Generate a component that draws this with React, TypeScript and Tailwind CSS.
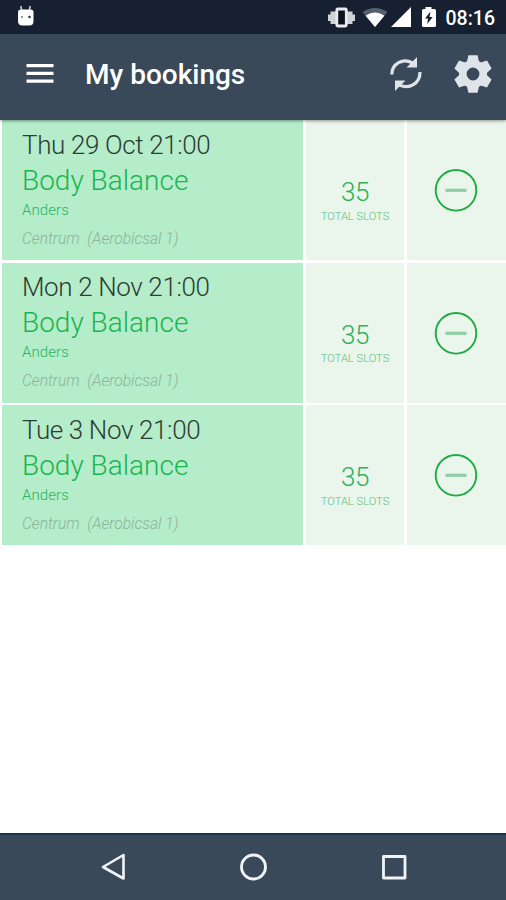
interface Booking {
  date: string;
  title: string;
  instructor: string;
  club: string;
  room: string;
  slots: number;
}

const bookings: Booking[] = [
  { date: 'Thu 29 Oct 21:00', title: 'Body Balance', instructor: 'Anders', club: 'Centrum', room: '(Aerobicsal 1)', slots: 35 },
  { date: 'Mon 2 Nov 21:00', title: 'Body Balance', instructor: 'Anders', club: 'Centrum', room: '(Aerobicsal 1)', slots: 35 },
  { date: 'Tue 3 Nov 21:00', title: 'Body Balance', instructor: 'Anders', club: 'Centrum', room: '(Aerobicsal 1)', slots: 35 },
];

const gearTeeth = [0, 60, 120, 180, 240, 300];

function StatusBar() {
  return (
    <div className="flex h-[34px] shrink-0 items-center justify-between bg-[#162030] pr-[11px] pl-4 text-white">
      <svg width="20" height="24" viewBox="0 0 20 24" fill="#fff">
        <path d="M4.800 1 5.800 6M14.200 1 13.200 6" stroke="#c4cad1" strokeWidth="1.600" />
        <path d="M2 7Q2 4.500 5 4.500h9.500q3 0 3 2.500V16q0 4.500-4.500 4.500H6.500Q2 20.500 2 16z" />
        <circle cx="6" cy="12" r="1.100" fill="#7b848d" />
        <circle cx="13.500" cy="12" r="1.200" fill="#162030" />
      </svg>
      <div className="flex items-center">
        <svg width="110" height="24" viewBox="0 0 110 24" fill="#fff">
          <path d="M0 9.500h2.500v6.500H0zM2.500 6.500H8v12.500H2.500zM24.500 9.500H27v6.500h-2.500zM19 6.500h5.500v12.500H19z" fill="#cfd2d6" />
          <rect x="8.800" y="4" width="9.500" height="17" rx="1" fill="#0c1420" stroke="#e8eaec" strokeWidth="2.800" />
          <path d="M34.500 7Q47 -1 59.500 7L47 22z" fill="#53606d" />
          <path d="M37.600 10.700Q47 4.500 56.400 10.700L47 22z" />
          <path d="M83 2v20H63z" />
          <path d="M97.500 2h6v2h3q1.500 0 1.500 1.500V20.500q0 1.500-1.500 1.500h-11q-1.500 0-1.500-1.500V5.500Q94 4 95.500 4h2z" />
          <path d="m102.500 6.500-5.500 7h3l-.8 5.500 5.500-7h-3.200z" fill="#162030" />
        </svg>
        <span className="ml-2 pt-[3px] text-[19.500px] leading-6 font-medium">08:16</span>
      </div>
    </div>
  );
}

function Toolbar() {
  return (
    <header className="relative z-10 flex h-[86px] shrink-0 items-center bg-[#394959] pr-[13px] pb-[6px] pl-[26px] text-white shadow-[0_1px_3px_rgba(0,0,0,0.4)]">
      <svg width="28" height="22" viewBox="0 0 28 22" fill="#fff">
        <path d="M.5 1h27v3.300H.5zM.5 8.800h27v3.300H.5zM.5 16.500h27v3.300H.5z" />
      </svg>
      <h1 className="ml-[31px] grow pt-[2px] text-[28px] leading-8 font-medium">My bookings</h1>
      <svg width="34" height="36" viewBox="0 0 34 36" fill="none" stroke="#dfe3ea" strokeWidth="3.200">
        <path d="M2.800 18.500C2.800 7.500 14 1.500 23.500 7M31 16C31 28 20 33.500 10.500 29" />
        <path d="M28 1v10.500H17.500zM6 35V24.500h10.500z" fill="#dfe3ea" stroke="none" />
      </svg>
      <svg className="ml-[30px]" width="40" height="40" viewBox="-20 -20 40 40" fill="#dfe3ea">
        <circle r="10.200" fill="none" stroke="#dfe3ea" strokeWidth="7.600" />
        {gearTeeth.map((angle) => (
          <path key={angle} d="M-4.600 -18.800h9.200L6 -12.500l1 3H-7l1 -3z" transform={`rotate(${angle})`} />
        ))}
      </svg>
    </header>
  );
}

function BookingRow({ booking }: { booking: Booking }) {
  return (
    <li className="grid h-[140px] grid-cols-[301px_98px_99px] gap-[3px]">
      <div className="bg-[#b5ecca] pt-[6.500px] pl-5 whitespace-pre">
        <p className="text-[26px] leading-9 font-light tracking-[-0.38px] text-[#2c3d32]">{booking.date}</p>
        <p className="text-[28px] leading-9 font-light text-[#1ab650]">{booking.title}</p>
        <p className="text-[15px] leading-[22px] font-light tracking-[0.1px] text-[#2ab55e]">{booking.instructor}</p>
        <p className="text-[15.600px] leading-9 font-light text-[#8bb49a] italic">{`${booking.club}  ${booking.room}`}</p>
      </div>
      <div className="bg-[#eaf5eb] pt-14 text-center font-light text-[#2cb05a]">
        <p className="text-[26px] leading-8 tracking-[-0.5px]">{booking.slots}</p>
        <p className="pt-[0.500px] text-[11.200px] leading-4 text-[#5cc082]">TOTAL SLOTS</p>
      </div>
      <div className="flex justify-center bg-[#eaf5eb] pt-12 pr-[2px]">
        <svg width="44" height="44" viewBox="0 0 44 44" fill="none">
          <circle cx="22" cy="22.300" r="20.300" stroke="#1fab43" strokeWidth="1.900" />
          <path d="M11.500 22.300h21" stroke="#8fcfa5" strokeWidth="3.200" />
        </svg>
      </div>
    </li>
  );
}

function NavigationBar() {
  return (
    <nav className="flex h-[67px] shrink-0 items-center justify-between border-t-2 border-[#17354c] bg-[#394959] pr-[97px] pb-[2px] pl-[99px]">
      <svg width="30" height="30" viewBox="0 0 30 30" fill="none" stroke="#f1f4f7" strokeWidth="2.600" strokeLinejoin="round">
        <path d="M24.500 3v23.500L4 15z" />
      </svg>
      <svg width="30" height="30" viewBox="0 0 30 30" fill="none" stroke="#f1f4f7" strokeWidth="2.800">
        <circle cx="14.500" cy="15" r="12" />
      </svg>
      <svg width="30" height="30" viewBox="0 0 30 30" fill="none" stroke="#f1f4f7" strokeWidth="2.800" strokeLinejoin="round">
        <rect x="4.500" y="4.500" width="21.500" height="21.500" />
      </svg>
    </nav>
  );
}

export default function App() {
  return (
    <div className="flex h-[900px] w-[506px] flex-col overflow-hidden bg-white font-[Roboto,sans-serif]">
      <StatusBar />
      <Toolbar />
      <ul className="flex grow flex-col gap-[2.500px] pl-[2px]">
        {bookings.map((booking) => (
          <BookingRow key={booking.date} booking={booking} />
        ))}
      </ul>
      <NavigationBar />
    </div>
  );
}
